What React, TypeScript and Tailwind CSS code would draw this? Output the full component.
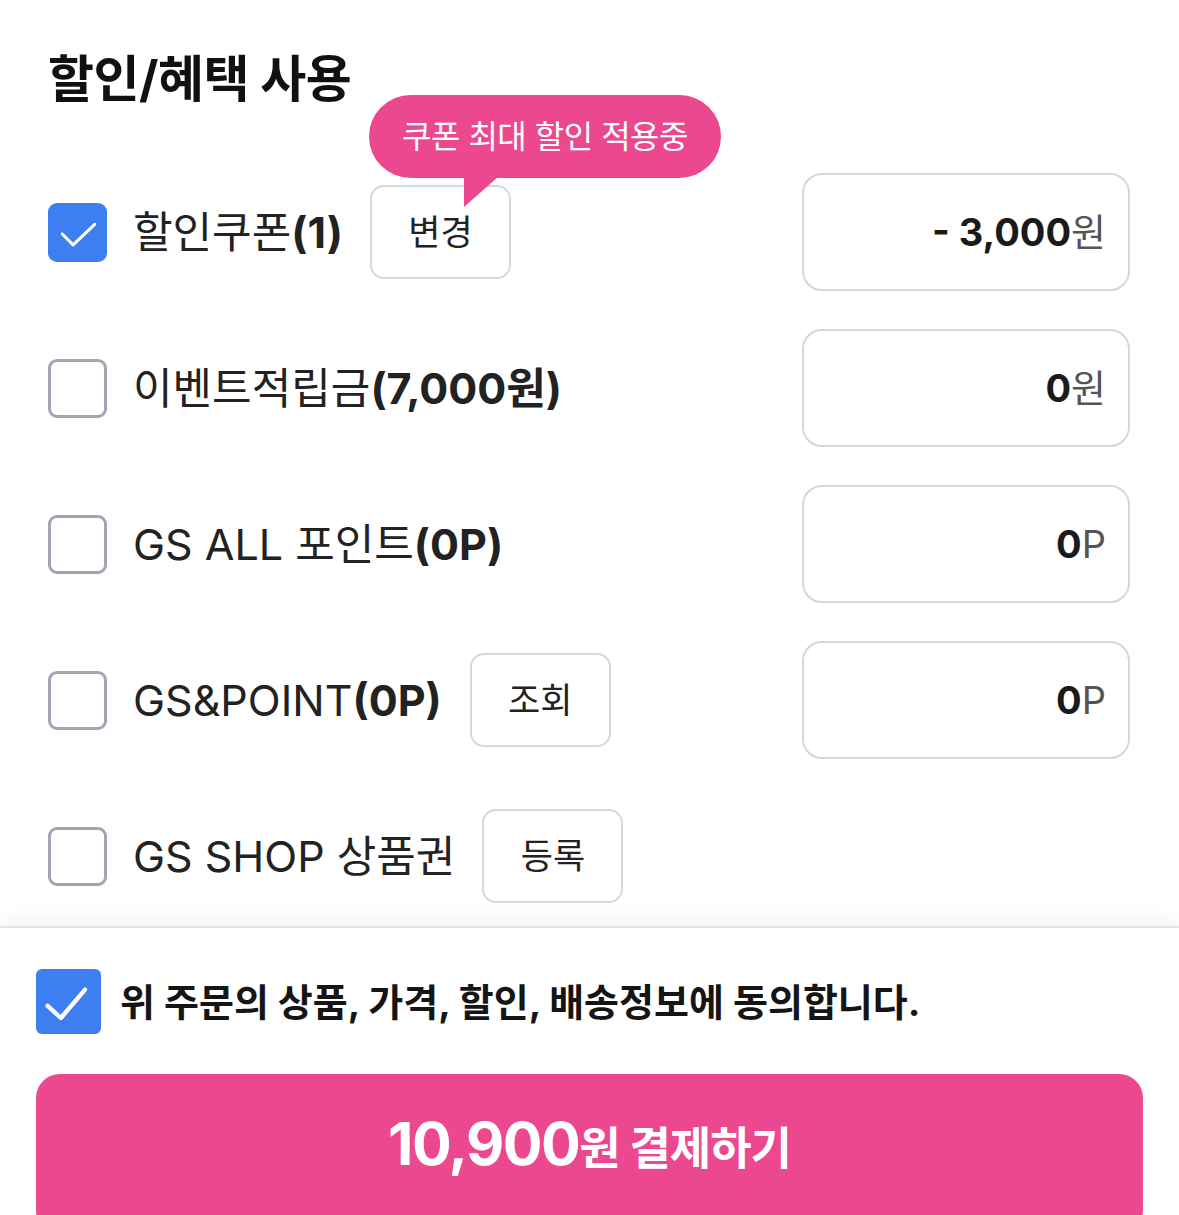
import React from "react";

const PINK = "bg-[#eb4890]";

function Check({ size, big }: { size: number; big?: boolean }) {
  return (
    <svg width={size} height={size} viewBox="0 0 24 24" fill="none">
      {big ? (
        <polyline points="4.3,13.6 9.2,18.1 18.1,7.6" stroke="white" strokeWidth="1.6" strokeLinecap="round" strokeLinejoin="round" />
      ) : (
        <polyline points="5.8,12.6 10.2,17 19,8.7" stroke="white" strokeWidth="1.25" strokeLinecap="round" strokeLinejoin="round" />
      )}
    </svg>
  );
}

function CheckBox({ checked }: { checked: boolean }) {
  if (checked) {
    return (
      <div className="w-[59px] h-[59px] shrink-0 rounded-[9px] bg-[#3d7ef0] flex items-center justify-center">
        <Check size={59} />
      </div>
    );
  }
  return <div className="w-[59px] h-[59px] shrink-0 rounded-[9px] border-[3px] border-[#a3a4b4] bg-white" />;
}

function SmallBtn({ children }: { children: React.ReactNode }) {
  return (
    <div className="w-[141px] h-[94px] shrink-0 rounded-[14px] border-2 border-[#d6d7dc] bg-white flex items-center justify-center text-[35px] text-[#222]">
      {children}
    </div>
  );
}

function ValueBox({ value, unit }: { value: string; unit: string }) {
  return (
    <div className="w-[328px] h-[118px] shrink-0 rounded-[20px] border-2 border-[#d6d7dc] flex items-center justify-end pr-[22px]">
      <span className="text-[38px] font-bold text-[#1a1a1a] leading-none">{value}</span>
      <span className="text-[38px] text-[#555] leading-none">{unit}</span>
    </div>
  );
}

export default function App() {
  return (
    <div
      className="w-[1179px] h-[1215px] overflow-hidden bg-white flex flex-col"
      style={{ fontFamily: 'Inter, "Noto Sans CJK KR", sans-serif' }}
    >
      <div className="h-[926px] shrink-0 overflow-hidden pl-[48px] pr-[49px] pt-[53px]">
        <h2 className="text-[50px] leading-[52px] font-bold text-[#111] tracking-[-0.5px]">할인/혜택 사용</h2>
        <div className="mt-[68px] flex flex-col gap-[38px]">
          {/* Row 1 */}
          <div className="h-[118px] flex items-center justify-between">
            <div className="flex items-center">
              <CheckBox checked />
              <span className="ml-[26px] text-[43px] text-[#222] leading-none">
                할인쿠폰<b className="font-bold">(1)</b>
              </span>
              <div className="ml-[27px] relative">
                <SmallBtn>변경</SmallBtn>
                <div className={`absolute left-[-1px] top-[-90px] w-[352px] h-[83px] rounded-full ${PINK} flex items-center justify-center`}>
                  <span className="text-[32px] text-white tracking-[-0.5px]">쿠폰 최대 할인 적용중</span>
                  <svg className="absolute left-[95px] top-[82px]" width="34" height="30" viewBox="0 0 34 30">
                    <polygon points="0,0 34,0 0,30" fill="#eb4890" />
                  </svg>
                </div>
              </div>
            </div>
            <ValueBox value="- 3,000" unit="원" />
          </div>
          {/* Row 2 */}
          <div className="h-[118px] flex items-center justify-between">
            <div className="flex items-center">
              <CheckBox checked={false} />
              <span className="ml-[26px] text-[43px] text-[#222] leading-none">
                이벤트적립금<b className="font-bold">(7,000원)</b>
              </span>
            </div>
            <ValueBox value="0" unit="원" />
          </div>
          {/* Row 3 */}
          <div className="h-[118px] flex items-center justify-between">
            <div className="flex items-center">
              <CheckBox checked={false} />
              <span className="ml-[26px] text-[43px] text-[#222] leading-none">
                GS ALL 포인트<b className="font-bold">(0P)</b>
              </span>
            </div>
            <ValueBox value="0" unit="P" />
          </div>
          {/* Row 4 */}
          <div className="h-[118px] flex items-center justify-between">
            <div className="flex items-center">
              <CheckBox checked={false} />
              <span className="ml-[26px] text-[43px] text-[#222] leading-none">
                GS&amp;POINT<b className="font-bold">(0P)</b>
              </span>
              <div className="ml-[28px]">
                <SmallBtn>조회</SmallBtn>
              </div>
            </div>
            <ValueBox value="0" unit="P" />
          </div>
          {/* Row 5 */}
          <div className="h-[118px] flex items-center justify-between">
            <div className="flex items-center">
              <CheckBox checked={false} />
              <span className="ml-[26px] text-[43px] text-[#222] leading-none">GS SHOP 상품권</span>
              <div className="ml-[27px]">
                <SmallBtn>등록</SmallBtn>
              </div>
            </div>
          </div>
        </div>
      </div>
      <div className="flex-1 border-t-2 border-[#e4e4e6] shadow-[0_-10px_14px_rgba(0,0,0,0.035)] relative bg-white px-[36px] pt-[41px]">
        <div className="flex items-center">
          <div className="w-[65px] h-[65px] shrink-0 rounded-[6px] bg-[#3d7ef0] flex items-center justify-center">
            <Check size={65} big />
          </div>
          <span className="ml-[19px] text-[38px] font-bold text-[#151515] leading-none">
            위 주문의 상품, 가격, 할인, 배송정보에 동의합니다.
          </span>
        </div>
        <div className={`mt-[40px] h-[160px] w-full rounded-[24px] ${PINK} flex items-start justify-center pt-[40px]`}>
          <span className="text-white font-bold leading-none flex items-baseline">
            <span className="text-[59px] tracking-[-1.5px]">10,900</span>
            <span className="text-[45px] tracking-[-1px]">원 결제하기</span>
          </span>
        </div>
      </div>
    </div>
  );
}
